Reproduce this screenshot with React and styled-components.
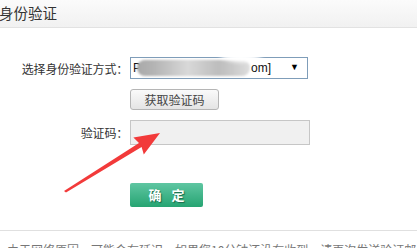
import React from "react";
import styled, { createGlobalStyle } from "styled-components";

const Global = createGlobalStyle`
  html, body { margin: 0; padding: 0; background: #fff; overflow: hidden; }
  body { font-family: "Noto Sans CJK SC", "Liberation Sans", sans-serif; color: #333; }
`;

const Page = styled.div`
  position: relative;
  width: 417px;
  height: 248px;
  overflow: hidden;
`;

const Header = styled.div`
  height: 27px;
  border-bottom: 1px solid #e2e2e2;
  background: linear-gradient(#fbfbfb, #f1f1f1);
  display: flex;
  align-items: center;
`;

const Title = styled.h1`
  margin: 0 0 0 -1px;
  font-size: 14.5px;
  font-weight: normal;
  color: #333;
  line-height: 1;
`;

const Form = styled.div`
  display: grid;
  grid-template-columns: 130px 180px;
  margin-top: 29px;
`;

const Label = styled.div`
  font-size: 12px;
  text-align: right;
  padding-right: 2px;
  align-self: center;
  color: #333;
  letter-spacing: -0.2px;
  margin-top: ${(p) => p.$mt || 0}px;
`;

const Cell = styled.div`
  margin-top: ${(p) => p.$mt || 0}px;
`;

const SelectBox = styled.div`
  position: relative;
  width: 178px;
  height: 22px;
  box-sizing: border-box;
  border: 1px solid #7f9db9;
  background: #fff;
  font-family: "Liberation Sans", sans-serif;
  font-size: 12px;
  color: #111;
`;

const Blur = styled.div`
  position: absolute;
  left: 6px;
  top: 2px;
  width: 113px;
  height: 16px;
  border-radius: 8px;
  background: linear-gradient(90deg, #a9a9a9 0, #b4b4b4 15%, #c6c6c6 30%, #d9d9d9 45%, #c9c9c9 60%, #bdbdbd 72%, #cacaca 85%, #dedede 100%);
  filter: blur(1.2px);
`;

const Smudge = styled.div`
  position: absolute;
  left: 88px;
  top: -14px;
  width: 44px;
  height: 18px;
  border-radius: 50%;
  background: #fff;
  filter: blur(2px);
`;

const SelText = styled.span`
  position: absolute;
  left: ${(p) => p.$x}px;
  top: 3px;
`;

const Caret = styled.span`
  position: absolute;
  right: 8px;
  top: 4px;
  font-size: 9px;
  color: #000;
`;

const GrayButton = styled.button`
  width: 89px;
  height: 21px;
  box-sizing: border-box;
  border: 1px solid #b5b5b5;
  border-radius: 3px;
  background: linear-gradient(#fafafa, #e4e4e4);
  font-family: "Noto Sans CJK SC", sans-serif;
  font-size: 12px;
  color: #444;
  padding: 0;
  line-height: 19px;
`;

const CodeInput = styled.input`
  display: block;
  width: 180px;
  height: 25px;
  box-sizing: border-box;
  border: 1px solid #c6c6c6;
  background: #f0f0f0;
  outline: none;
`;

const GreenButton = styled.button`
  width: 73px;
  height: 24px;
  box-sizing: border-box;
  border: none;
  border-radius: 2px;
  background: linear-gradient(#5fc6a2, #26a472);
  color: #fff;
  font-family: "Noto Sans CJK SC", sans-serif;
  font-weight: bold;
  font-size: 13px;
  letter-spacing: 10px;
  padding: 0 0 0 10px;
  text-shadow: 1px 1px 1px #1a6b4a;
`;

const Divider = styled.div`
  margin-top: 23px;
  border-top: 1px solid #e0e0e0;
`;

const Note = styled.div`
  display: flex;
  align-items: center;
  margin-top: 10px;
  white-space: nowrap;
  font-size: 12px;
  color: #777;
`;

const Bullet = styled.span`
  display: inline-block;
  width: 3px;
  height: 3px;
  background: #999;
  margin: 0 5px 0 2px;
`;

const Arrow = styled.svg`
  position: absolute;
  left: 0;
  top: 0;
  pointer-events: none;
`;

export default function App() {
  return (
    <Page>
      <Global />
      <Header>
        <Title>身份验证</Title>
      </Header>
      <Form>
        <Label>选择身份验证方式：</Label>
        <Cell>
          <SelectBox>
            <SelText $x={2}>P</SelText>
            <Blur />
            <Smudge />
            <SelText $x={120}>om]</SelText>
            <Caret>▼</Caret>
          </SelectBox>
        </Cell>
        <div />
        <Cell $mt={7}>
          <GrayButton>获取验证码</GrayButton>
        </Cell>
        <Label $mt={10}>验证码：</Label>
        <Cell $mt={10}>
          <CodeInput />
        </Cell>
        <div />
        <Cell $mt={36}>
          <GreenButton>确定</GreenButton>
        </Cell>
      </Form>
      <Divider />
      <Note>
        <Bullet />
        由于网络原因，可能会有延迟，如果您10分钟还没有收到，请再次发送验证邮件
      </Note>
      <Arrow width="417" height="248" viewBox="0 0 417 248">
        <polygon
          points="64,191 139,142.9 133.4,137.4 160,133 143.8,154.6 141.6,147.1 66,192.5"
          fill="#f23a3a"
        />
      </Arrow>
    </Page>
  );
}
